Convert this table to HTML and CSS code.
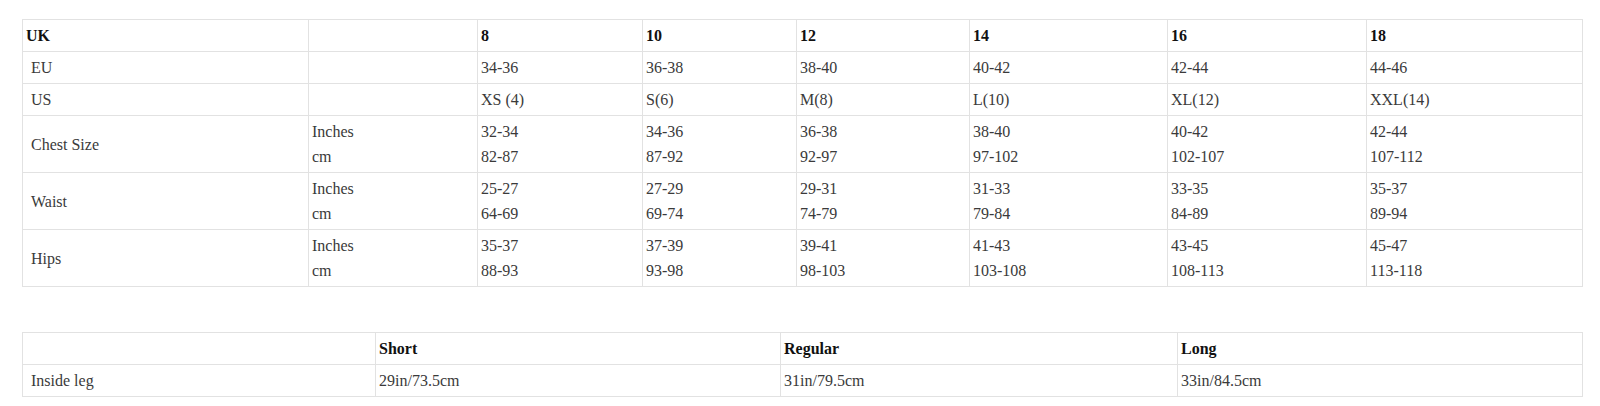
FILE: index.html
```html
<!DOCTYPE html>
<html lang="en">
<head>
<meta charset="utf-8">
<title>Size guide</title>
<link rel="stylesheet" href="styles.css">
</head>
<body>
<div class="page">
  <table class="chart size-chart">
    <colgroup>
      <col class="c-a"><col class="c-b"><col class="c-8"><col class="c-10"><col class="c-12"><col class="c-14"><col class="c-16"><col class="c-18">
    </colgroup>
    <tbody>
      <tr class="head">
        <td>UK</td><td></td><td>8</td><td>10</td><td>12</td><td>14</td><td>16</td><td>18</td>
      </tr>
      <tr>
        <td class="label">EU</td><td></td><td>34-36</td><td>36-38</td><td>38-40</td><td>40-42</td><td>42-44</td><td>44-46</td>
      </tr>
      <tr>
        <td class="label">US</td><td></td><td>XS (4)</td><td>S(6)</td><td>M(8)</td><td>L(10)</td><td>XL(12)</td><td>XXL(14)</td>
      </tr>
      <tr>
        <td class="label">Chest Size</td><td>Inches<br>cm</td><td>32-34<br>82-87</td><td>34-36<br>87-92</td><td>36-38<br>92-97</td><td>38-40<br>97-102</td><td>40-42<br>102-107</td><td>42-44<br>107-112</td>
      </tr>
      <tr>
        <td class="label">Waist</td><td>Inches<br>cm</td><td>25-27<br>64-69</td><td>27-29<br>69-74</td><td>29-31<br>74-79</td><td>31-33<br>79-84</td><td>33-35<br>84-89</td><td>35-37<br>89-94</td>
      </tr>
      <tr>
        <td class="label">Hips</td><td>Inches<br>cm</td><td>35-37<br>88-93</td><td>37-39<br>93-98</td><td>39-41<br>98-103</td><td>41-43<br>103-108</td><td>43-45<br>108-113</td><td>45-47<br>113-118</td>
      </tr>
    </tbody>
  </table>

  <table class="chart leg-chart">
    <colgroup>
      <col class="l-a"><col class="l-b"><col class="l-c"><col class="l-d">
    </colgroup>
    <tbody>
      <tr class="head">
        <td></td><td>Short</td><td>Regular</td><td>Long</td>
      </tr>
      <tr>
        <td class="label">Inside leg</td><td>29in/73.5cm</td><td>31in/79.5cm</td><td>33in/84.5cm</td>
      </tr>
    </tbody>
  </table>
</div>
</body>
</html>
```

FILE: styles.css
```css
html, body {
  margin: 0;
  padding: 0;
  background: #ffffff;
}

body {
  font-family: "Liberation Serif", "Times New Roman", serif;
  font-size: 16px;
  color: #3a3a3a;
}

.page {
  padding: 19px 0 0 22px;
  display: flex;
  flex-direction: column;
  align-items: flex-start;
  gap: 45px;
}

.chart {
  border-collapse: collapse;
  table-layout: fixed;
  width: 1560px;
  border: 1px solid #e2e2e2;
}

.chart td {
  border: 1px solid #e2e2e2;
  padding: 3px 4px 3px 3px;
  line-height: 25px;
  vertical-align: middle;
  text-align: left;
  white-space: nowrap;
}

.chart .head td {
  font-weight: bold;
  color: #111111;
}

.chart td.label {
  padding-left: 8px;
}

.c-a { width: 286px; }
.c-b { width: 169px; }
.c-8 { width: 165px; }
.c-10 { width: 154px; }
.c-12 { width: 173px; }
.c-14 { width: 198px; }
.c-16 { width: 199px; }
.c-18 { width: 216px; }

.l-a { width: 353px; }
.l-b { width: 405px; }
.l-c { width: 397px; }
.l-d { width: 405px; }
```
